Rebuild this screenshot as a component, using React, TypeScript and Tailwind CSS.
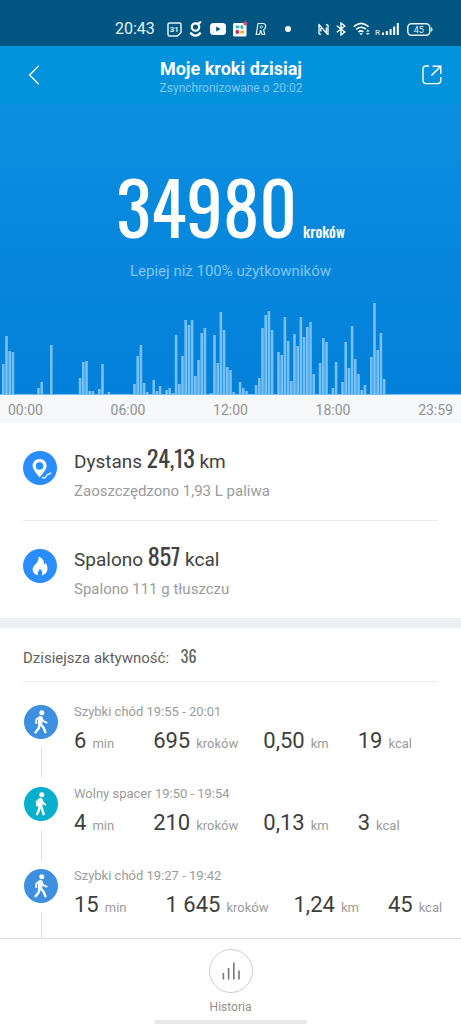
import type { ReactNode } from "react";

type Activity = {
  kind: "fast" | "slow";
  title: string;
  minutes: string;
  steps: string;
  km: string;
  kcal: string;
};

const ACTIVITIES: Activity[] = [
  { kind: "fast", title: "Szybki chód 19:55 - 20:01", minutes: "6", steps: "695", km: "0,50", kcal: "19" },
  { kind: "slow", title: "Wolny spacer 19:50 - 19:54", minutes: "4", steps: "210", km: "0,13", kcal: "3" },
  { kind: "fast", title: "Szybki chód 19:27 - 19:42", minutes: "15", steps: "1 645", km: "1,24", kcal: "45" },
];

// one value per 10 minutes, starting at midnight
const STEPS = [
  31, 59, 44, 43, 0, 0, 0, 0, 0, 0, 0, 7, 13, 0, 1, 50, 0, 0, 0, 0, 0, 0, 0, 0, 17, 33, 34, 4, 4, 0,
  6, 31, 0, 3, 0, 0, 0, 0, 0, 0, 0, 11, 39, 50, 12, 3, 0, 15, 4, 9, 1, 5, 7, 2, 60, 11, 39, 75, 70, 75,
  19, 35, 62, 67, 1, 2, 60, 32, 83, 65, 28, 25, 3, 0, 13, 7, 4, 0, 0, 10, 17, 67, 80, 84, 65, 0, 43, 40, 78, 54,
  14, 61, 49, 78, 58, 68, 73, 21, 0, 32, 57, 53, 0, 7, 33, 0, 13, 53, 27, 69, 36, 21, 5, 10, 0, 38, 92, 45, 62, 16,
];

const HOURS = ["00:00", "06:00", "12:00", "18:00", "23:59"];

function StatusBar() {
  return (
    <div className="flex h-[46px] shrink-0 items-center bg-[#005681] pt-3 pr-7 pl-[115px] text-white">
      <span className="w-[52px] text-base leading-5 text-[#e3f1f8]">20:43</span>
      <div className="flex items-center gap-[7px]">
        <svg width="15" height="15" viewBox="0 0 15 15" fill="none">
          <path d="M1 2.5Q1 1 2.5 1H12.5Q14 1 14 2.5V10.5L10.5 14H2.5Q1 14 1 12.5Z" stroke="#e3f1f8" strokeWidth="1.5" />
          <text x="7.3" y="10.4" textAnchor="middle" fontSize="8" fontWeight="700" fill="#e3f1f8">31</text>
        </svg>
        <svg width="14" height="16" viewBox="0 0 14 16" fill="none" stroke="#fff" strokeWidth="2.2">
          <circle cx="6.5" cy="6" r="3.7" />
          <path d="M9 3.2Q10 1.2 12.2 1.2M1.5 11.5Q3 14.6 6.5 14.6Q10 14.6 11.5 11.5" />
        </svg>
        <svg width="16" height="12" viewBox="0 0 16 12">
          <rect width="16" height="12" rx="3.5" fill="#fff" />
          <path d="M6.2 3.6L10.6 6L6.2 8.4Z" fill="#005681" />
        </svg>
        <svg width="15" height="16" viewBox="0 0 15 16">
          <rect x="0" y="2" width="13.5" height="13.5" rx="1.5" fill="#fff" />
          <rect x="2.5" y="4.5" width="4" height="3" rx="1.4" fill="#36b5d8" />
          <rect x="7.4" y="4.2" width="3" height="4" rx="1.4" fill="#4eb58a" />
          <rect x="2.6" y="9" width="3.4" height="4" rx="1.4" fill="#d4226a" />
          <rect x="7.2" y="9.4" width="4" height="3.2" rx="1.4" fill="#ecb22e" />
          <circle cx="12.4" cy="2.6" r="2" fill="#e0447c" />
        </svg>
        <svg width="12" height="14" viewBox="0 0 12 14" fill="none" stroke="#e3f1f8" strokeWidth="1.2" strokeLinejoin="round">
          <path d="M3 1.5H8Q11 1.7 10.6 4.6Q10.3 7 8.6 7.8L9.8 12.4H7L6 8.6H5.4L4.6 12.4H1.2Z" />
          <path d="M5.6 4H7.4Q8.2 5.4 6.6 6H5.2Z" strokeWidth="0.8" />
        </svg>
      </div>
      <div className="ml-[18px] h-1.5 w-1.5 rounded-full bg-white" />
      <div className="ml-auto flex items-center gap-[7px]">
        <svg width="11" height="13" viewBox="0 0 11 13" fill="none" stroke="#fff" strokeWidth="1.3" strokeLinejoin="round">
          <path d="M3 11.6L1 10.6V1.4L8.4 10.2V4.4M2.8 8.6V5M8 1.4L10 2.4V11.6L8.4 10.2" />
        </svg>
        <svg width="10" height="14" viewBox="0 0 10 14" fill="none" stroke="#fff" strokeWidth="1.4">
          <path d="M.8 3.8L8.8 10L5 13V1L8.8 4L.8 10.2" />
        </svg>
        <div className="flex items-center gap-1">
          <svg width="18" height="14" viewBox="0 0 18 14" fill="none" stroke="#fff" strokeWidth="1.6">
            <path d="M.8 4.6Q8 -2 15.6 4.6M3.2 7.4Q8 3.2 13 7.2M5.4 10Q8 7.8 10.4 9.8" />
            <path d="M6.2 11.2L8 13.2L9.8 11.2Z" fill="#fff" stroke="none" />
            <path d="M13 9.6L14.8 7.6L16.6 9.6ZM13 11L14.8 13L16.6 11Z" fill="#fff" stroke="none" />
          </svg>
          <svg width="25" height="14" viewBox="0 0 25 14" fill="#fff">
            <text x="0" y="13.4" fontSize="8">R</text>
            <path d="M7 10.5H9V13H7ZM10.8 9H12.8V13H10.8ZM14.6 7H16.6V13H14.6ZM18.2 4.5H20.2V13H18.2ZM21.8 1H23.8V13H21.8Z" />
          </svg>
        </div>
        <svg width="26" height="13" viewBox="0 0 26 13">
          <rect x=".8" y=".8" width="22" height="11.4" rx="3.6" fill="none" stroke="#e3f1f8" strokeWidth="1.5" />
          <path d="M24 4.2Q25.6 4.4 25.6 6.5Q25.6 8.6 24 8.8Z" fill="#e3f1f8" />
          <text x="11.8" y="9.7" textAnchor="middle" fontSize="9" fill="#e3f1f8">45</text>
        </svg>
      </div>
    </div>
  );
}

function Header() {
  return (
    <header className="flex h-[58px] shrink-0 items-center justify-between bg-[#0292dc] pr-[19px] pl-7 text-white">
      <button type="button" aria-label="Wstecz">
        <svg width="12" height="20" viewBox="0 0 12 20" fill="none" stroke="currentColor" strokeWidth="1.3">
          <path d="M10.8 .8L1.6 10L10.8 19.2" />
        </svg>
      </button>
      <div className="pt-1 text-center">
        <h1 className="text-lg leading-5 font-bold">Moje kroki dzisiaj</h1>
        <p className="pt-px text-xs leading-4 text-[#80c9f0]">Zsynchronizowane o 20:02</p>
      </div>
      <button type="button" aria-label="Udostępnij">
        <svg width="20" height="20" viewBox="0 0 20 20" fill="none" stroke="currentColor" strokeWidth="1.4">
          <path d="M7 1H4Q1 1 1 4V15.6Q1 18.6 4 18.6H15.8Q18.8 18.6 18.8 15.6V12" />
          <path d="M9.4 10.6L18.6 1.4M10.6 1.2H18.8V9" />
        </svg>
      </button>
    </header>
  );
}

function StepsChart() {
  return (
    <svg className="block h-[92px] w-full" viewBox="0 0 461 92" preserveAspectRatio="none" role="img" aria-label="Kroki w ciągu dnia">
      {STEPS.map((value, i) => (
        <rect key={i} x={2 + i * 3.2} y={92 - value} width="2.6" height={value} fill="#78c0f2" />
      ))}
      <rect y="91" width="461" height="1" fill="#78c0f2" />
    </svg>
  );
}

function Narrow({ className, children }: { className: string; children: ReactNode }) {
  return <span className={`font-['Oswald','Roboto_Condensed','Liberation_Sans_Narrow',sans-serif] ${className}`}>{children}</span>;
}

function Summary({ icon, label, value, unit, note }: { icon: ReactNode; label: string; value: string; unit: string; note: string }) {
  return (
    <div className="flex items-start gap-[17px]">
      <div className="mt-1 flex h-[34px] w-[34px] items-center justify-center rounded-full bg-[#2a8dff]">{icon}</div>
      <div>
        <p className="text-[19px] leading-7 text-[#424242]">
          {label} <Narrow className="text-2xl leading-5">{value}</Narrow> {unit}
        </p>
        <p className="pt-[5px] text-[15px] leading-5 text-[#9b9b9b]">{note}</p>
      </div>
    </div>
  );
}

function PinIcon() {
  return (
    <svg width="34" height="34" viewBox="0 0 34 34">
      <path fillRule="evenodd" fill="#fff" d="M16.6 8C12.4 8 9.6 11 9.6 14.6C9.6 18.4 13.6 23 16.6 26.4C19.6 23 23.6 18.4 23.6 14.6C23.6 11 20.8 8 16.6 8ZM16.6 11.2A3.8 3.8 0 1 1 16.6 18.8A3.8 3.8 0 1 1 16.6 11.2Z" />
      <path d="M19 26.4C22 27.6 23 26.4 23.6 24.4C24.4 22.6 26.4 23.6 28 21.8" fill="none" stroke="#fff" strokeWidth="1.3" />
    </svg>
  );
}

function FlameIcon() {
  return (
    <svg width="34" height="34" viewBox="0 0 34 34">
      <path fill="#fff" d="M15.4 7.6C20 9.4 21.4 12.4 21 15.6C21.8 15.2 22.2 14.4 22.2 13.6C24 15.6 24.8 18 24.4 20.4C24 23.6 21.4 26 18.6 26.2C19.8 24 19.4 21.6 16.6 19.8C16.6 21.6 15.2 22 14.8 23.4C14.4 24.6 14.8 25.6 15.4 26.2C12 25.8 9.4 23.4 9.6 20C9.8 17 12.4 15.8 14 13.4C15.4 11.4 16 9.8 15.4 7.6Z" />
    </svg>
  );
}

function WalkIcon({ kind }: { kind: Activity["kind"] }) {
  return (
    <svg width="34" height="34" viewBox="0 0 34 34" fill="none" stroke="#fff" strokeLinecap="round" strokeLinejoin="round">
      <circle cx="17.8" cy="7.8" r="2.5" fill="#fff" stroke="none" />
      {kind === "fast" ? (
        <>
          <path d="M16.6 13.2L16 18.6" strokeWidth="4.6" />
          <path d="M15 12.4L12.4 14.4L12 18.2M18 13.6L19.4 16.2L22.6 17.6" strokeWidth="1.8" />
          <path d="M15.4 19.4L14.8 23.2L11.6 27.2M16.8 19.4L19.6 22.8L21.4 27.2" strokeWidth="2.4" />
        </>
      ) : (
        <>
          <path d="M16.6 13.2L16.2 18.6" strokeWidth="4.6" />
          <path d="M15 12.4L12.8 14.6L13 18.6M18 13.6L19.2 16L21.2 17.6" strokeWidth="1.8" />
          <path d="M15.4 19.4L15 23.2L13 27.2M17.2 19.4L18.4 23L19.6 27.2" strokeWidth="2.4" />
        </>
      )}
    </svg>
  );
}

function Metric({ value, unit, className = "" }: { value: string; unit: string; className?: string }) {
  return (
    <span className={`text-[13px] whitespace-nowrap text-[#9b9b9b] ${className}`}>
      <span className="mr-1.5 text-[22px] text-[#3e3e3e]">{value}</span>
      {unit}
    </span>
  );
}

function ActivityRow({ item }: { item: Activity }) {
  return (
    <li className="flex h-[82px] gap-4">
      <div className="flex flex-col items-center">
        <div className={`h-[34px] w-[34px] shrink-0 rounded-full ${item.kind === "fast" ? "bg-[#3d8fe0]" : "bg-[#06b0cc]"}`}>
          <WalkIcon kind={item.kind} />
        </div>
        <div className="my-[9px] w-px flex-1 bg-[#dcdcdc]" />
      </div>
      <div>
        <p className="text-[13px] leading-[14px] text-[#9b9b9b]">{item.title}</p>
        <div className="flex items-baseline pt-2 leading-7">
          <Metric value={item.minutes} unit="min" className="mr-[39px]" />
          <Metric value={item.steps} unit="kroków" className="mr-[25px]" />
          <Metric value={item.km} unit="km" className="mr-[29px]" />
          <Metric value={item.kcal} unit="kcal" />
        </div>
      </div>
    </li>
  );
}

export default function App() {
  return (
    <div className="flex h-screen flex-col bg-white font-[Roboto,sans-serif]">
      <StatusBar />
      <Header />
      <main className="min-h-0 flex-1 overflow-y-auto [scrollbar-width:none]">
        <section className="bg-linear-to-b from-[#0d8ee0] to-[#0380d9] pt-[61px]">
          <div className="flex items-baseline justify-center gap-1.5 text-white">
            <Narrow className="text-[73px] leading-[80px]">34980</Narrow>
            <Narrow className="text-[15px] leading-5 font-medium">kroków</Narrow>
          </div>
          <p className="pt-4 text-center text-[15px] leading-5 text-[#84c6f1]">Lepiej niż 100% użytkowników</p>
          <div className="pt-[22px]">
            <StepsChart />
          </div>
        </section>
        <div className="flex h-7 items-center justify-between bg-[#f7f8fa] px-2 pt-0.5 text-sm text-[#8f9194]">
          {HOURS.map((hour) => (
            <span key={hour}>{hour}</span>
          ))}
        </div>

        <section className="px-[23px]">
          <div className="pt-6 pb-[19px]">
            <Summary icon={<PinIcon />} label="Dystans" value="24,13" unit="km" note="Zaoszczędzono 1,93 L paliwa" />
          </div>
          <div className="border-t border-[#ebebeb] pt-6 pb-[19px]">
            <Summary icon={<FlameIcon />} label="Spalono" value="857" unit="kcal" note="Spalono 111 g tłuszczu" />
          </div>
        </section>

        <div className="h-2.5 bg-[#eeeff2]" />

        <section className="px-[23px]">
          <h2 className="border-b border-[#ebebeb] pt-5 pb-3 text-[15px] leading-[21px] text-[#616161]">
            Dzisiejsza aktywność: <Narrow className="ml-2 text-base leading-4">36</Narrow>
          </h2>
          <ul className="pt-[23px] pl-px">
            {ACTIVITIES.map((item) => (
              <ActivityRow key={item.title} item={item} />
            ))}
          </ul>
        </section>
      </main>

      <footer className="flex shrink-0 flex-col items-center border-t border-[#dedede]">
        <button type="button" className="flex flex-col items-center pt-2.5 text-xs leading-4 text-[#919191]">
          <span className="flex h-11 w-11 items-center justify-center rounded-full border border-[#cfcfcf]">
            <svg width="18" height="18" viewBox="0 0 18 18" stroke="#777" strokeWidth="1.6">
              <path d="M1.4 17.4V11M6.6 17.4V6M11.8 17.4V.6M17 17.4V8.6" />
            </svg>
          </span>
          <span className="pt-1.5">Historia</span>
        </button>
        <div className="mt-[5px] h-1 w-[153px] rounded-full bg-[#e8e8e8]" />
      </footer>
    </div>
  );
}
